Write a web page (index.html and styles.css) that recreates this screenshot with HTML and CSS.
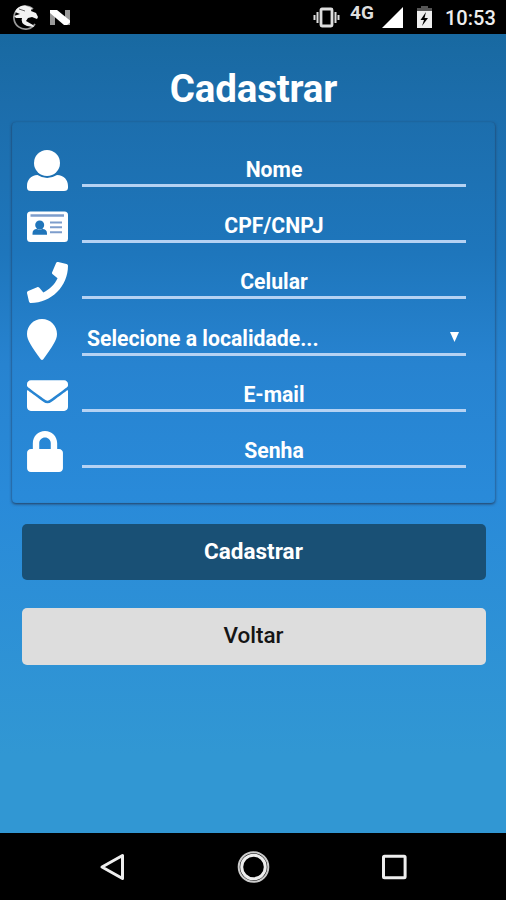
FILE: index.html
```html
<!DOCTYPE html>
<html lang="pt-BR">
<head>
<meta charset="utf-8">
<title>Cadastrar</title>
<link rel="stylesheet" href="styles.css">
</head>
<body>
<header class="status">
  <svg class="status-left" width="80" height="34" viewBox="0 0 80 34">
    <path d="M33 9A11.500 11.500 0 1 0 35 24" fill="none" stroke="#999" stroke-width="1.700"/>
    <path d="M15 12Q17 6 25 5.500L32 8 31 11 36 13 38 17 37 19 32 17 28 18 26 21 33 25 34 27 27 26Q20 23 22 18L16 18 14 16 20 14z" fill="#f2f2f2"/>
    <path d="M19 9L25 11" stroke="#666" stroke-width="1"/>
    <path d="M50 10h5v15h-5zM65 10h5v15h-5z" fill="#999"/>
    <path d="M50 10h7l13 10.500v2l-3 2.500h-3L50 13z" fill="#fff"/>
  </svg>
  <svg class="vibrate" width="28" height="22" viewBox="0 0 28 22" fill="none" stroke="#ddd" stroke-width="2">
    <rect x="8" y="3" width="11" height="17" rx="1" stroke-width="2.800"/>
    <path d="M4.500 6v11M1.500 9v5M22.500 6v11M25.500 9v5"/>
  </svg>
  <span class="network">4G</span>
  <svg class="signal" width="21" height="21" viewBox="0 0 21 21"><path d="M0 21L21 0v21z" fill="#fff"/></svg>
  <svg class="battery" width="15" height="22" viewBox="0 0 15 22">
    <path d="M4 0h7v2h4v4H0V2h4z" fill="#555"/>
    <path d="M0 5h15v17H0z" fill="#eee"/>
    <path d="M9 6L3.500 14h3.500l-2 6 6-8H7.500z" fill="#000"/>
  </svg>
  <span class="clock">10:53</span>
</header>
<main class="screen">
  <h1 class="title">Cadastrar</h1>
  <form class="card">
    <div class="row">
      <svg class="icon" width="41" height="41" viewBox="0 0 41 41"><circle cx="20" cy="13" r="13"/><path d="M10.500 25Q20 31 30 25C37 25 41 30 41 36v1.500q0 3.500-4 3.500H4q-4 0-4-3.500V36C0 30 4 25 10.500 25z"/></svg>
      <div class="field">Nome</div>
    </div>
    <div class="row">
      <svg class="icon" width="41" height="41" viewBox="0 0 41 41">
        <rect y="5.500" width="41" height="30.500" rx="3.500"/>
        <path class="muted" d="M3.500 8.200h33.500v2.500H3.500zM23 15.500h12v2H23zM23 20.300h12v2H23zM23 25.200h12v2H23z"/>
        <circle class="cut" cx="12.700" cy="19" r="4.500"/>
        <path class="cut" d="M5.500 28.800v-1.300q0-4.500 4.500-4.500 2.500 1.200 5.300 0 4.700 0 4.700 4.500v1.300z"/>
      </svg>
      <div class="field">CPF/CNPJ</div>
    </div>
    <div class="row">
      <svg class="icon" width="41" height="41" viewBox="0 0 512 512"><path d="M493.400 24.600l-104-24c-11.300-2.600-22.900 3.300-27.500 13.900l-48 112c-4.200 9.800-1.400 21.300 6.900 28l60.600 49.600c-36 76.700-98.900 140.500-177.200 177.200l-49.600-60.600c-6.800-8.300-18.200-11.100-28-6.900l-112 48C3.900 366.500-2 378.100.6 389.400l24 104C27.100 504.200 36.700 512 48 512c256.100 0 464-207.500 464-464 0-11.200-7.700-20.900-18.600-23.400z"/></svg>
      <div class="field">Celular</div>
    </div>
    <div class="row">
      <svg class="icon" width="41" height="41" viewBox="0 0 41 41"><path d="M15 0C23.500 0 30 6.800 30 15 30 21.500 25.500 27 16.300 40.300q-1.300 1.400-2.600 0C4.500 27 0 21.500 0 15 0 6.800 6.500 0 15 0z"/></svg>
      <div class="field select"><span>Selecione a localidade...</span><svg class="arrow" width="9" height="10" viewBox="0 0 9 10"><path d="M0 0h9L4.500 10z"/></svg></div>
    </div>
    <div class="row">
      <svg class="icon" width="41" height="41" viewBox="0 0 512 512"><path d="M502.300 190.800c3.900-3.100 9.700-.2 9.700 4.700V400c0 26.500-21.500 48-48 48H48c-26.500 0-48-21.500-48-48V195.600c0-5 5.700-7.800 9.700-4.700 22.400 17.400 52.100 39.500 154.100 113.600 21.100 15.400 56.700 47.800 92.200 47.600 35.700.3 72-32.800 92.300-47.600 102-74.100 131.600-96.300 154-113.700zM256 320c23.200.4 56.600-29.200 73.400-41.400 132.700-96.300 142.800-104.700 173.400-128.700 5.800-4.500 9.200-11.500 9.200-18.900v-19c0-26.500-21.500-48-48-48H48c-26.500 0-48 21.500-48 48v19c0 7.400 3.400 14.300 9.200 18.900 30.600 23.900 40.700 32.400 173.400 128.700 16.800 12.200 50.200 41.800 73.400 41.400z"/></svg>
      <div class="field">E-mail</div>
    </div>
    <div class="row">
      <svg class="icon" width="36" height="41" viewBox="0 0 448 512"><path d="M400 224h-24v-72C376 68.200 307.800 0 224 0S72 68.200 72 152v72H48c-26.500 0-48 21.500-48 48v192c0 26.500 21.500 48 48 48h352c26.500 0 48-21.500 48-48V272c0-26.500-21.500-48-48-48zm-104 0H152v-72c0-39.700 32.300-72 72-72s72 32.300 72 72v72z"/></svg>
      <div class="field">Senha</div>
    </div>
  </form>
  <button class="btn primary">Cadastrar</button>
  <button class="btn secondary">Voltar</button>
</main>
<nav class="nav">
  <svg width="26" height="30" viewBox="0 0 26 30"><path d="M3 15L23.500 3.500v23z"/></svg>
  <svg width="34" height="34" viewBox="0 0 34 34"><circle cx="17.500" cy="17" r="14.800" class="ring"/><circle cx="17.500" cy="17" r="11.800"/></svg>
  <svg width="26" height="26" viewBox="0 0 26 26"><rect x="2.500" y="2.200" width="21.600" height="21.600" rx="1"/></svg>
</nav>
</body>
</html>
```
FILE: styles.css
```css
* { box-sizing: border-box; }
body {
  margin: 0;
  width: 506px;
  height: 900px;
  overflow: hidden;
  display: flex;
  flex-direction: column;
  font-family: Roboto, "Liberation Sans", sans-serif;
  color: #fff;
}
.status {
  height: 34px;
  background: #000;
  display: flex;
  align-items: flex-start;
}
.status-left { margin-right: 233px; }
.vibrate { margin-top: 6px; }
.network {
  width: 31px;
  padding-left: 9px;
  margin-top: 3px;
  font-size: 19px;
  line-height: 20px;
  font-weight: 700;
  color: #ddd;
}
.signal { margin: 7px 0 0 10px; }
.battery { margin: 6px 0 0 14px; }
.clock {
  margin: 6px 0 0 13px;
  font-size: 20px;
  line-height: 24px;
  font-weight: 500;
  color: #eee;
}
.screen {
  height: 799px;
  padding: 30px 11px 0 12px;
  background: linear-gradient(#1869a1 0, #1c6dab 70px, #1e76bc 220px, #2783d0 330px, #298ad9 460px, #3197d3 720px, #3197d3 100%);
}
.title {
  margin: 0;
  height: 58px;
  font-size: 38.500px;
  line-height: 50px;
  font-weight: 700;
  text-align: center;
  letter-spacing: -.2px;
}
.card {
  height: 381px;
  padding: 17px 29px 0 15px;
  border-radius: 4px;
  box-shadow: 0 1px 3px rgba(35, 50, 75, .9), inset 0 0 1px rgba(30, 60, 100, .35);
}
.row {
  height: 56.350px;
  display: flex;
  align-items: flex-start;
  padding-top: 10.500px;
}
.icon {
  flex: none;
  fill: #fff;
}
.row .cut { fill: #2075ba; }
.row .muted { fill: #7d9dcc; }
.field {
  width: 384px;
  height: 36px;
  margin: 1px 0 0 auto;
  border-bottom: 3px solid #b5d2f3;
  font-size: 21.200px;
  line-height: 37px;
  font-weight: 700;
  text-align: center;
}
.select {
  display: flex;
  justify-content: space-between;
  align-items: flex-start;
  padding: 0 7px 0 5px;
}
.arrow { margin-top: 12px; fill: #fff; }
.btn {
  display: block;
  width: 464px;
  height: 56px;
  margin: 21px 0 0 10px;
  padding: 0 1px 2px 0;
  border: 0;
  border-radius: 5px;
  font: 700 22.500px Roboto, sans-serif;
}
.primary { background: #195075; color: #fff; }
.secondary { height: 57px; margin-top: 28px; padding-bottom: 4px; background: #ddd; color: #151515; font-weight: 500; }
.nav {
  height: 67px;
  padding: 0 99px 0 99px;
  background: #000;
  display: flex;
  align-items: center;
  justify-content: space-between;
}
.nav svg {
  fill: none;
  stroke: #eee;
  stroke-width: 3;
  stroke-linejoin: round;
}
.nav .ring { stroke: #ccc; stroke-width: 2; }
```
